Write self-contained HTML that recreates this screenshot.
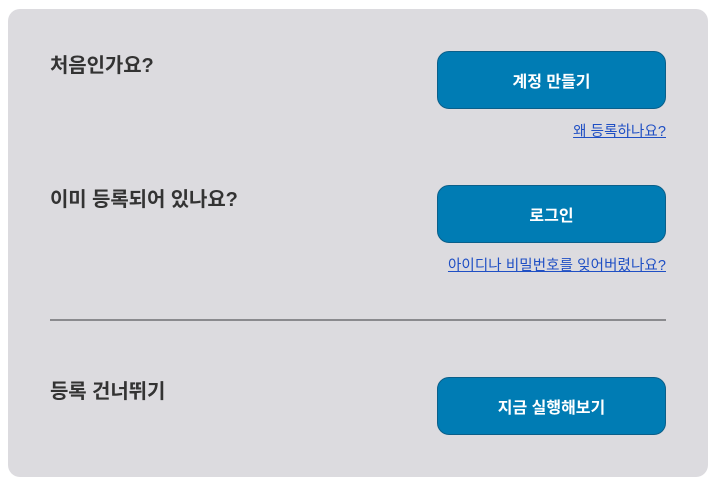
<!DOCTYPE html>
<html><head><meta charset="utf-8"><style>
body{margin:0;width:718px;height:496px;background:#fff;font-family:"Liberation Sans","Noto Sans CJK KR",sans-serif;position:relative;overflow:hidden}
.p{position:absolute;left:8px;top:9px;width:700px;height:468px;background:#dcdbdf;border-radius:12px}
.h{position:absolute;left:50px;font-size:20px;font-weight:bold;color:#333;line-height:24px;letter-spacing:-0.1px}
.b{position:absolute;left:437px;width:227px;height:56px;background:#007cb4;border:1px solid #0a5f8a;border-radius:12px;color:#fff;font-size:16px;font-weight:bold;display:flex;align-items:center;justify-content:center}
.l{position:absolute;right:52px;font-size:14.5px;color:#1f4fc4;text-decoration:underline;line-height:18px;letter-spacing:0.1px}
.d{position:absolute;left:50px;top:319px;width:616px;height:2px;background:#8a8a8e}
</style></head><body>
<div class="p"></div>
<div class="h" style="top:54px">처음인가요?</div>
<div class="b" style="top:51px">계정 만들기</div>
<div class="l" style="top:123px">왜 등록하나요?</div>
<div class="h" style="top:188px">이미 등록되어 있나요?</div>
<div class="b" style="top:185px">로그인</div>
<div class="l" style="top:257px">아이디나 비밀번호를 잊어버렸나요?</div>
<div class="d"></div>
<div class="h" style="top:380px">등록 건너뛰기</div>
<div class="b" style="top:377px">지금 실행해보기</div>
</body></html>
